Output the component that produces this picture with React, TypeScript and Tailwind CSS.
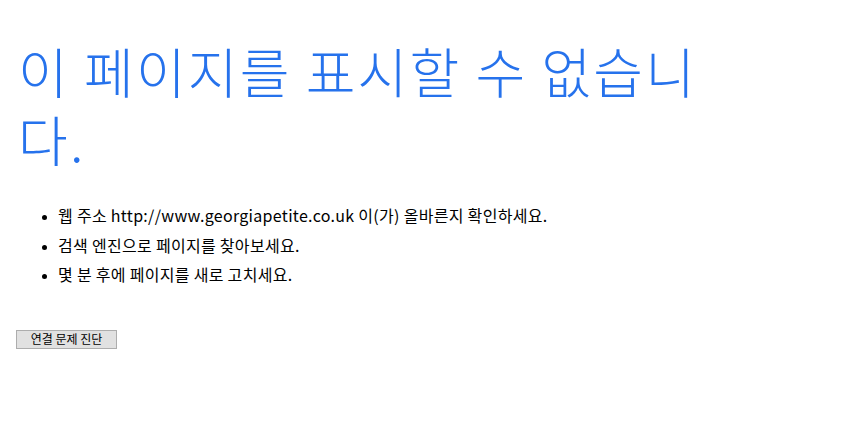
export default function App() {
  return (
    <div
      className="min-h-screen bg-white text-black"
      style={{ fontFamily: '"Noto Sans CJK KR", "Noto Sans", sans-serif' }}
    >
      <div className="pt-[37px] pl-[18px]">
        <h1 className="max-w-[700px] text-[54px] leading-[68px] font-light tracking-[2.2px] text-[#2672ec]">
          이 페이지를 표시할 수 없습니다.
        </h1>
        <ul className="mt-[28px] list-disc pl-[40px] text-[16px] leading-[29.5px] tracking-[0.3px] marker:text-[12px]">
          <li>웹 주소 http://www.georgiapetite.co.uk 이(가) 올바른지 확인하세요.</li>
          <li>검색 엔진으로 페이지를 찾아보세요.</li>
          <li>몇 분 후에 페이지를 새로 고치세요.</li>
        </ul>
        <button className="mt-[40px] -ml-[2px] h-[19px] w-[101px] border border-[#adadad] bg-[#e1e1e1] text-[12px] leading-none text-black">
          연결 문제 진단
        </button>
      </div>
    </div>
  );
}
